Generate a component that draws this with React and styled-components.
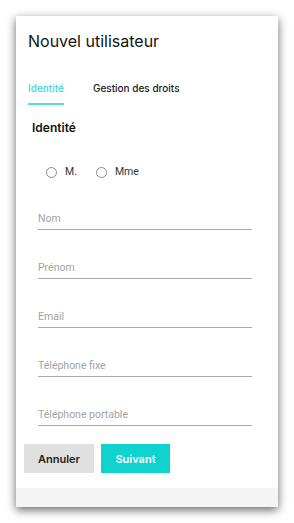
import React, { useState } from 'react';
import styled, { createGlobalStyle } from 'styled-components';

const GlobalStyle = createGlobalStyle`
  body {
    margin: 0;
    background: #ffffff;
    font-family: 'Inter', 'Open Sans', sans-serif;
  }
`

const fields = ['Nom', 'Prénom', 'Email', 'Téléphone fixe', 'Téléphone portable']

const App = () => {
  const [tab, setTab] = useState(0)
  const [civ, setCiv] = useState(null)

  return (
    <Page>
      <GlobalStyle />
      <Card>
        <Title>Nouvel utilisateur</Title>

        <Tabs>
          <Tab active={tab === 0} onClick={() => setTab(0)}>Identité</Tab>
          <Tab active={tab === 1} onClick={() => setTab(1)}>Gestion des droits</Tab>
        </Tabs>

        <Heading>Identité</Heading>

        <RadioRow>
          <RadioItem onClick={() => setCiv('m')}>
            <Circle checked={civ === 'm'} />
            M.
          </RadioItem>
          <RadioItem onClick={() => setCiv('mme')}>
            <Circle checked={civ === 'mme'} />
            Mme
          </RadioItem>
        </RadioRow>

        <Fields>
          {fields.map((f) => (
            <Field key={f}>
              <Input placeholder={f} />
            </Field>
          ))}
        </Fields>

        <Actions>
          <Button>Annuler</Button>
          <Button primary>Suivant</Button>
        </Actions>

        <Footer />
      </Card>
    </Page>
  );
};

export default App;

const Page = styled.div`
  padding: 16px;
  width: 294px;
  height: 523px;
  box-sizing: border-box;
`
const Card = styled.div`
  width: 262px;
  height: 491px;
  background: #fff;
  box-shadow: 0 3px 9px rgba(0, 0, 0, 0.6);
  display: flex;
  flex-direction: column;
`
const Title = styled.h1`
  margin: 0;
  padding: 15px 12px 0;
  font-size: 16px;
  line-height: 20px;
  font-weight: 400;
  color: #111;
`
const Tabs = styled.div`
  display: flex;
  gap: 29px;
  padding: 0 12px;
  margin-top: 30px;
`
const Tab = styled.div`
  font-size: 10px;
  line-height: 14px;
  padding-bottom: 8px;
  border-bottom: 2px solid ${(p) => (p.active ? '#52dfe3' : 'transparent')};
  color: ${(p) => (p.active ? '#3fd6dc' : '#1a1a1a')};
  font-weight: 500;
  cursor: pointer;
`
const Heading = styled.h2`
  margin: 15px 0 0;
  padding: 0 16px;
  font-size: 12px;
  line-height: 16px;
  font-weight: 600;
  color: #111;
`
const RadioRow = styled.div`
  display: flex;
  gap: 19px;
  margin-top: 29px;
  padding-left: 30px;
`
const RadioItem = styled.label`
  display: flex;
  align-items: center;
  gap: 8px;
  font-family: 'Roboto', sans-serif;
  font-size: 10.5px;
  line-height: 14px;
  color: #333;
  cursor: pointer;
`
const Circle = styled.span`
  width: 9px;
  height: 9px;
  border-radius: 50%;
  border: 1.5px solid #8a8a8a;
  box-sizing: content-box;
  background: ${(p) => (p.checked ? 'radial-gradient(#12d3cf 40%, #fff 45%)' : '#fff')};
`
const Fields = styled.div`
  display: flex;
  flex-direction: column;
  gap: 30px;
  margin-top: 32px;
  padding: 0 26px 0 22px;
`
const Field = styled.div`
  border-bottom: 1px solid #a9a9a9;
  padding-bottom: 4px;
`
const Input = styled.input`
  display: block;
  width: 100%;
  border: none;
  outline: none;
  padding: 0;
  height: 14px;
  font-family: 'Roboto', sans-serif;
  font-size: 10.5px;
  color: #333;
  &::placeholder {
    color: #a3a3a3;
  }
`
const Actions = styled.div`
  display: flex;
  gap: 7px;
  margin-top: 18px;
  padding: 0 8px;
`
const Button = styled.button`
  width: ${(p) => (p.primary ? '69px' : '70px')};
  height: 29px;
  border: none;
  border-radius: 0;
  background: ${(p) => (p.primary ? '#0ed3cf' : '#e0e0e0')};
  color: ${(p) => (p.primary ? '#fff' : '#222')};
  font-family: 'Inter', sans-serif;
  font-size: 11px;
  font-weight: 600;
  cursor: pointer;
`
const Footer = styled.div`
  margin-top: auto;
  height: 19px;
  background: #f4f4f4;
`
